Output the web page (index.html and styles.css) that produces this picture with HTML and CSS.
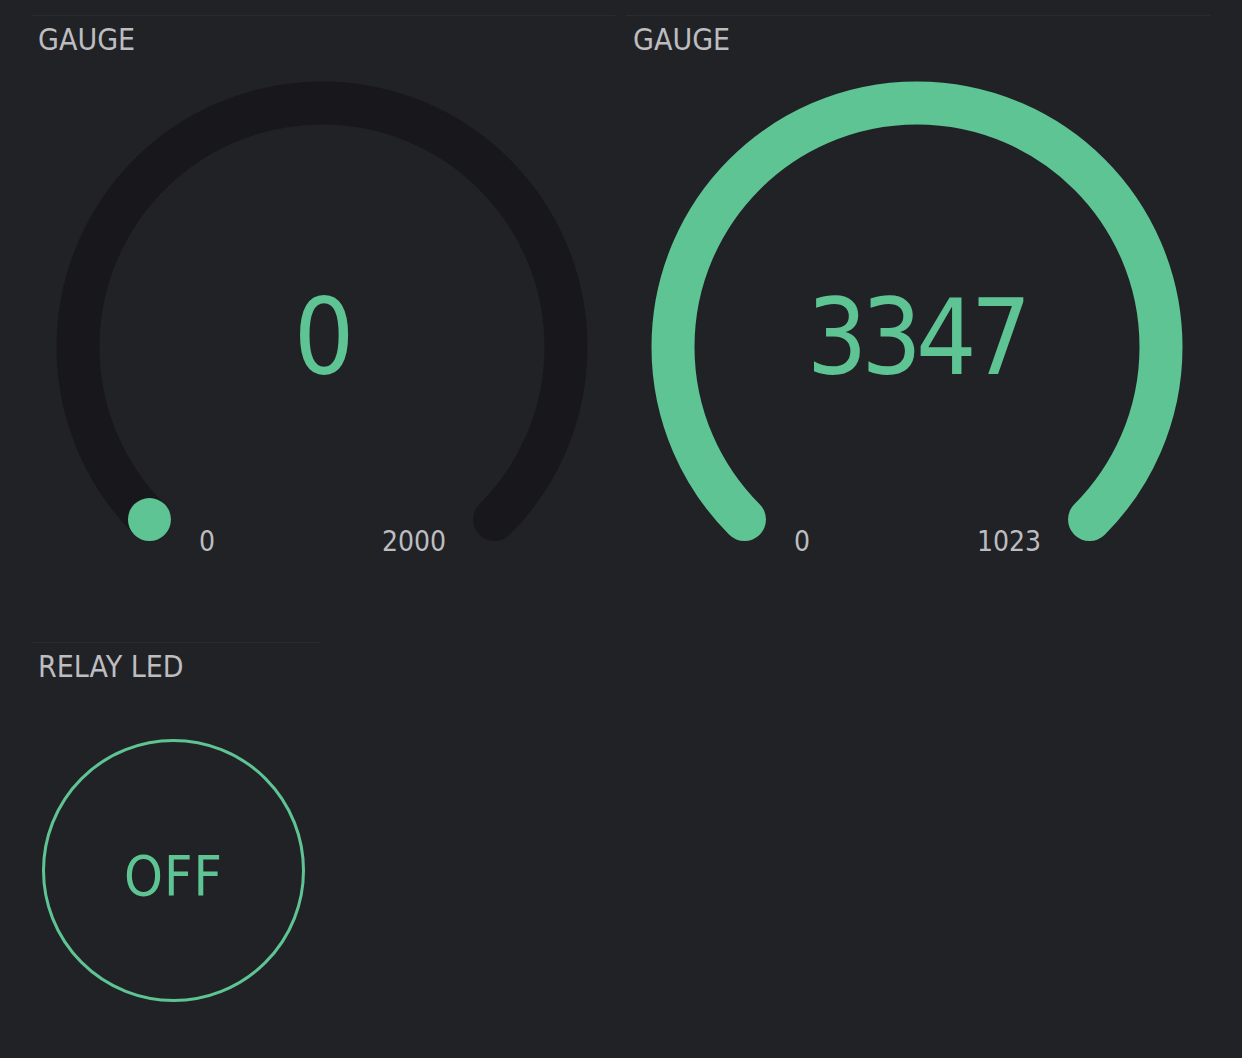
FILE: index.html
```html
<!DOCTYPE html>
<html lang="en">
<head>
<meta charset="utf-8">
<title>Dashboard</title>
<link rel="stylesheet" href="styles.css">
</head>
<body>
<main class="dash">
  <section class="widget gauge-widget">
    <h2 class="label">GAUGE</h2>
    <div class="gauge">
      <svg class="gauge-svg" viewBox="0 0 540 470" width="540" height="470" aria-hidden="true">
        <path class="track" d="M 97.47 438.53 A 244 244 0 1 1 442.53 438.53"/>
        <circle class="knob" cx="97.47" cy="438.53" r="21.5"/>
      </svg>
      <div class="value">0</div>
      <div class="scale"><span>0</span><span>2000</span></div>
    </div>
  </section>
  <section class="widget gauge-widget">
    <h2 class="label">GAUGE</h2>
    <div class="gauge">
      <svg class="gauge-svg" viewBox="0 0 540 470" width="540" height="470" aria-hidden="true">
        <path class="fill" d="M 97.47 438.53 A 244 244 0 1 1 442.53 438.53"/>
      </svg>
      <div class="value">3347</div>
      <div class="scale"><span>0</span><span>1023</span></div>
    </div>
  </section>
  <section class="widget led-widget">
    <h2 class="label">RELAY LED</h2>
    <div class="led"><span class="led-text">OFF</span></div>
  </section>
</main>
</body>
</html>
```
FILE: styles.css
```css
html, body {
  margin: 0;
  padding: 0;
}
body {
  background: #212226;
  height: 1058px;
  overflow: hidden;
  font-family: "DejaVu Sans Condensed", "DejaVu Sans", sans-serif;
  font-stretch: condensed;
}
.dash {
  display: grid;
  grid-template-columns: 584px 584px;
  column-gap: 11px;
  row-gap: 91px;
  padding: 15px 0 0 31px;
  align-items: start;
}
.widget {
  border-top: 1px solid #2a2b30;
  padding-top: 6px;
}
.label {
  margin: 0;
  padding-left: 7px;
  font-size: 30px;
  line-height: 36px;
  font-weight: normal;
  color: #bdbdc0;
}
.gauge {
  position: relative;
  padding-top: 23px;
  height: 470px;
}
.gauge-svg {
  display: block;
  margin: 0 auto;
  position: relative;
  left: -1px;
}
.track, .fill {
  fill: none;
  stroke-width: 43;
  stroke-linecap: round;
}
.track { stroke: #18181c; }
.fill { stroke: #5ec494; }
.knob { fill: #5ec494; }
.value {
  position: absolute;
  left: 0;
  right: 0;
  top: 220px;
  height: 120px;
  line-height: 120px;
  text-align: center;
  padding-right: 4px;
  font-size: 106px;
  letter-spacing: -6px;
  color: #5ec494;
}
.scale {
  position: absolute;
  left: 50%;
  width: 247px;
  margin-left: -124px;
  top: 468px;
  display: flex;
  justify-content: space-between;
  font-size: 28px;
  line-height: 32px;
  color: #bdbdc0;
}
.led-widget {
  width: 290px;
  justify-self: start;
}
.led {
  margin: 54px 0 0 11px;
  width: 263px;
  height: 263px;
  box-sizing: border-box;
  border: 3px solid #5ec494;
  border-radius: 50%;
  display: flex;
  align-items: center;
  justify-content: center;
  padding-top: 10px;
}
.led-text {
  font-size: 55px;
  line-height: 64px;
  letter-spacing: 1px;
  color: #5ec494;
}
```
